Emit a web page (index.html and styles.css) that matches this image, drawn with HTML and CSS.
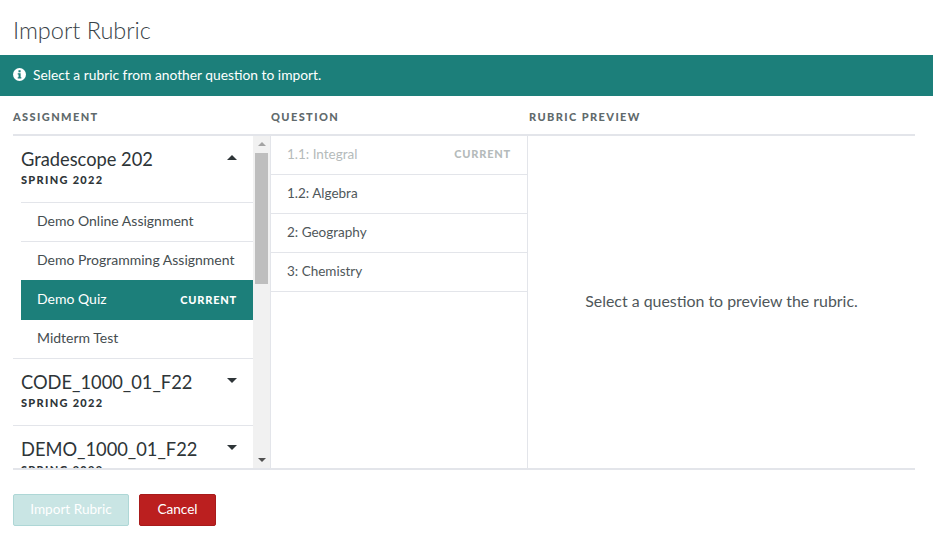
FILE: index.html
```html
<!DOCTYPE html>
<html lang="en">
<head>
    <meta charset="UTF-8">
    <title>Import Rubric</title>
    <link rel="stylesheet" href="styles.css">
</head>
<body>
    <h1 class="title">Import Rubric</h1>

    <div class="banner">
        <svg class="info-icon" viewBox="0 0 14 14" width="13" height="13">
            <circle cx="7" cy="7" r="7" fill="#fff"/>
            <rect x="5.9" y="2.4" width="2.3" height="2.2" fill="#1c7f7a"/>
            <path d="M5.1 5.6h3.1v4.3h.8v1.4H5.1V9.9h.9V7h-.9z" fill="#1c7f7a"/>
        </svg>
        <span>Select a rubric from another question to import.</span>
    </div>

    <div class="picker">
        <div class="col-heads">
            <div class="col-head head-assignment">ASSIGNMENT</div>
            <div class="col-head head-question">QUESTION</div>
            <div class="col-head">RUBRIC PREVIEW</div>
        </div>

        <div class="col-body">
            <div class="assignments">
                <div class="course">
                    <div class="course-head">
                        <div class="course-name">Gradescope 202</div>
                        <div class="course-term">SPRING 2022</div>
                        <span class="caret caret-up"></span>
                    </div>
                    <div class="course-items">
                        <div class="item">Demo Online Assignment</div>
                        <div class="item">Demo Programming Assignment</div>
                        <div class="item item-current">Demo Quiz <span class="tag">CURRENT</span></div>
                        <div class="item">Midterm Test</div>
                    </div>
                </div>
                <div class="course">
                    <div class="course-head">
                        <div class="course-name">CODE_1000_01_F22</div>
                        <div class="course-term">SPRING 2022</div>
                        <span class="caret"></span>
                    </div>
                </div>
                <div class="course">
                    <div class="course-head">
                        <div class="course-name">DEMO_1000_01_F22</div>
                        <div class="course-term">SPRING 2022</div>
                        <span class="caret"></span>
                    </div>
                </div>
            </div>

            <div class="scrollbar">
                <span class="arrow arrow-up"></span>
                <div class="track"><div class="thumb"></div></div>
                <span class="arrow arrow-down"></span>
            </div>

            <div class="questions">
                <div class="question question-current">1.1: Integral <span class="tag">CURRENT</span></div>
                <div class="question">1.2: Algebra</div>
                <div class="question">2: Geography</div>
                <div class="question">3: Chemistry</div>
            </div>

            <div class="preview">Select a question to preview the rubric.</div>
        </div>
    </div>

    <div class="actions">
        <button class="btn btn-import">Import Rubric</button>
        <button class="btn btn-cancel">Cancel</button>
    </div>
</body>
</html>
```

FILE: styles.css
```css
* {
    box-sizing: border-box;
}
html, body {
    height: 100%;
}
body {
    margin: 0;
    overflow: hidden;
    font-family: Lato, "Open Sans", sans-serif;
    color: #4f575a;
    background: #fff;
}
.title {
    height: 55px;
    margin: 0;
    padding: 15px 13px 0;
    font-size: 23.5px;
    font-weight: 300;
    line-height: 30px;
    color: #3a4348;
}
.banner {
    display: flex;
    align-items: center;
    gap: 7px;
    height: 41px;
    padding: 0 13px 3px;
    background: #1c7f7a;
    color: #fff;
    font-size: 13.8px;
}
.info-icon {
    flex: none;
}
.picker {
    width: 902px;
    margin-left: 13px;
}
.col-heads {
    display: flex;
    height: 40px;
    padding-top: 14px;
    border-bottom: 2px solid #e3e5ea;
}
.col-head {
    font-size: 11px;
    font-weight: 900;
    letter-spacing: 1.4px;
    line-height: 14px;
    color: #5f6a6c;
}
.head-assignment {
    width: 258px;
}
.head-question {
    width: 258px;
}
.col-body {
    display: flex;
    height: 334px;
    border-bottom: 2px solid #e3e5ea;
}
.assignments {
    width: 240px;
    overflow: hidden;
}
.course {
    border-bottom: 1px solid #e3e5ea;
}
.course-head {
    position: relative;
    height: 66px;
    padding: 11px 8px 0;
}
.course-name {
    font-size: 18.3px;
    line-height: 24px;
    color: #2e3538;
}
.course-term {
    font-size: 11px;
    font-weight: 900;
    letter-spacing: 1.3px;
    line-height: 16px;
    margin-top: 1px;
    color: #2e3538;
}
.caret {
    position: absolute;
    top: 19px;
    right: 16px;
    border-left: 5px solid transparent;
    border-right: 5px solid transparent;
    border-top: 5px solid #2e3538;
}
.caret-up {
    border-top: 0;
    border-bottom: 5px solid #2e3538;
}
.course-items {
    padding-left: 8px;
}
.item {
    display: flex;
    justify-content: space-between;
    align-items: center;
    height: 39px;
    padding: 0 16px 4px;
    border-top: 1px solid #e3e5ea;
    font-size: 14px;
    color: #454d50;
}
.item-current {
    height: 40px;
    background: #1c7f7a;
    border-top-color: #1c7f7a;
    color: #fff;
}
.item-current + .item {
    height: 38px;
    border-top: 0;
}
.tag {
    font-size: 11px;
    font-weight: 900;
    letter-spacing: 0.8px;
    margin-bottom: 1px;
}
.item .tag {
    margin-bottom: -1px;
}
.scrollbar {
    display: flex;
    flex-direction: column;
    align-items: center;
    width: 18px;
    background: #f1f1f1;
    border-right: 1px solid #e3e5ea;
}
.arrow {
    flex: none;
    margin: 6px 0;
    border-left: 4px solid transparent;
    border-right: 4px solid transparent;
}
.arrow-up {
    border-bottom: 4px solid #a3a3a3;
}
.arrow-down {
    border-top: 4px solid #505050;
}
.track {
    flex: 1;
    width: 100%;
    padding-top: 1px;
}
.thumb {
    width: 13px;
    margin-left: 2px;
    height: 131px;
    background: #bebebe;
}
.questions {
    width: 257px;
    border-right: 1px solid #e3e5ea;
}
.question {
    display: flex;
    justify-content: space-between;
    align-items: center;
    height: 39px;
    padding: 0 16px 2px;
    border-bottom: 1px solid #e3e5ea;
    font-size: 13.5px;
}
.question-current {
    color: #b5bbbb;
}
.preview {
    flex: 1;
    display: flex;
    align-items: center;
    justify-content: center;
    font-size: 15.9px;
    padding-bottom: 4px;
}
.actions {
    display: flex;
    gap: 10px;
    padding: 24px 13px 0;
}
.btn {
    height: 32px;
    padding-bottom: 3px;
    border-radius: 2px;
    font-family: inherit;
    font-size: 13.6px;
    color: #fff;
}
.btn-import {
    width: 116px;
    background: #c9e5e4;
    border: 1px solid #aed7d6;
}
.btn-cancel {
    width: 77px;
    background: #bb1f1f;
    border: 1px solid #a81b1b;
}
```
